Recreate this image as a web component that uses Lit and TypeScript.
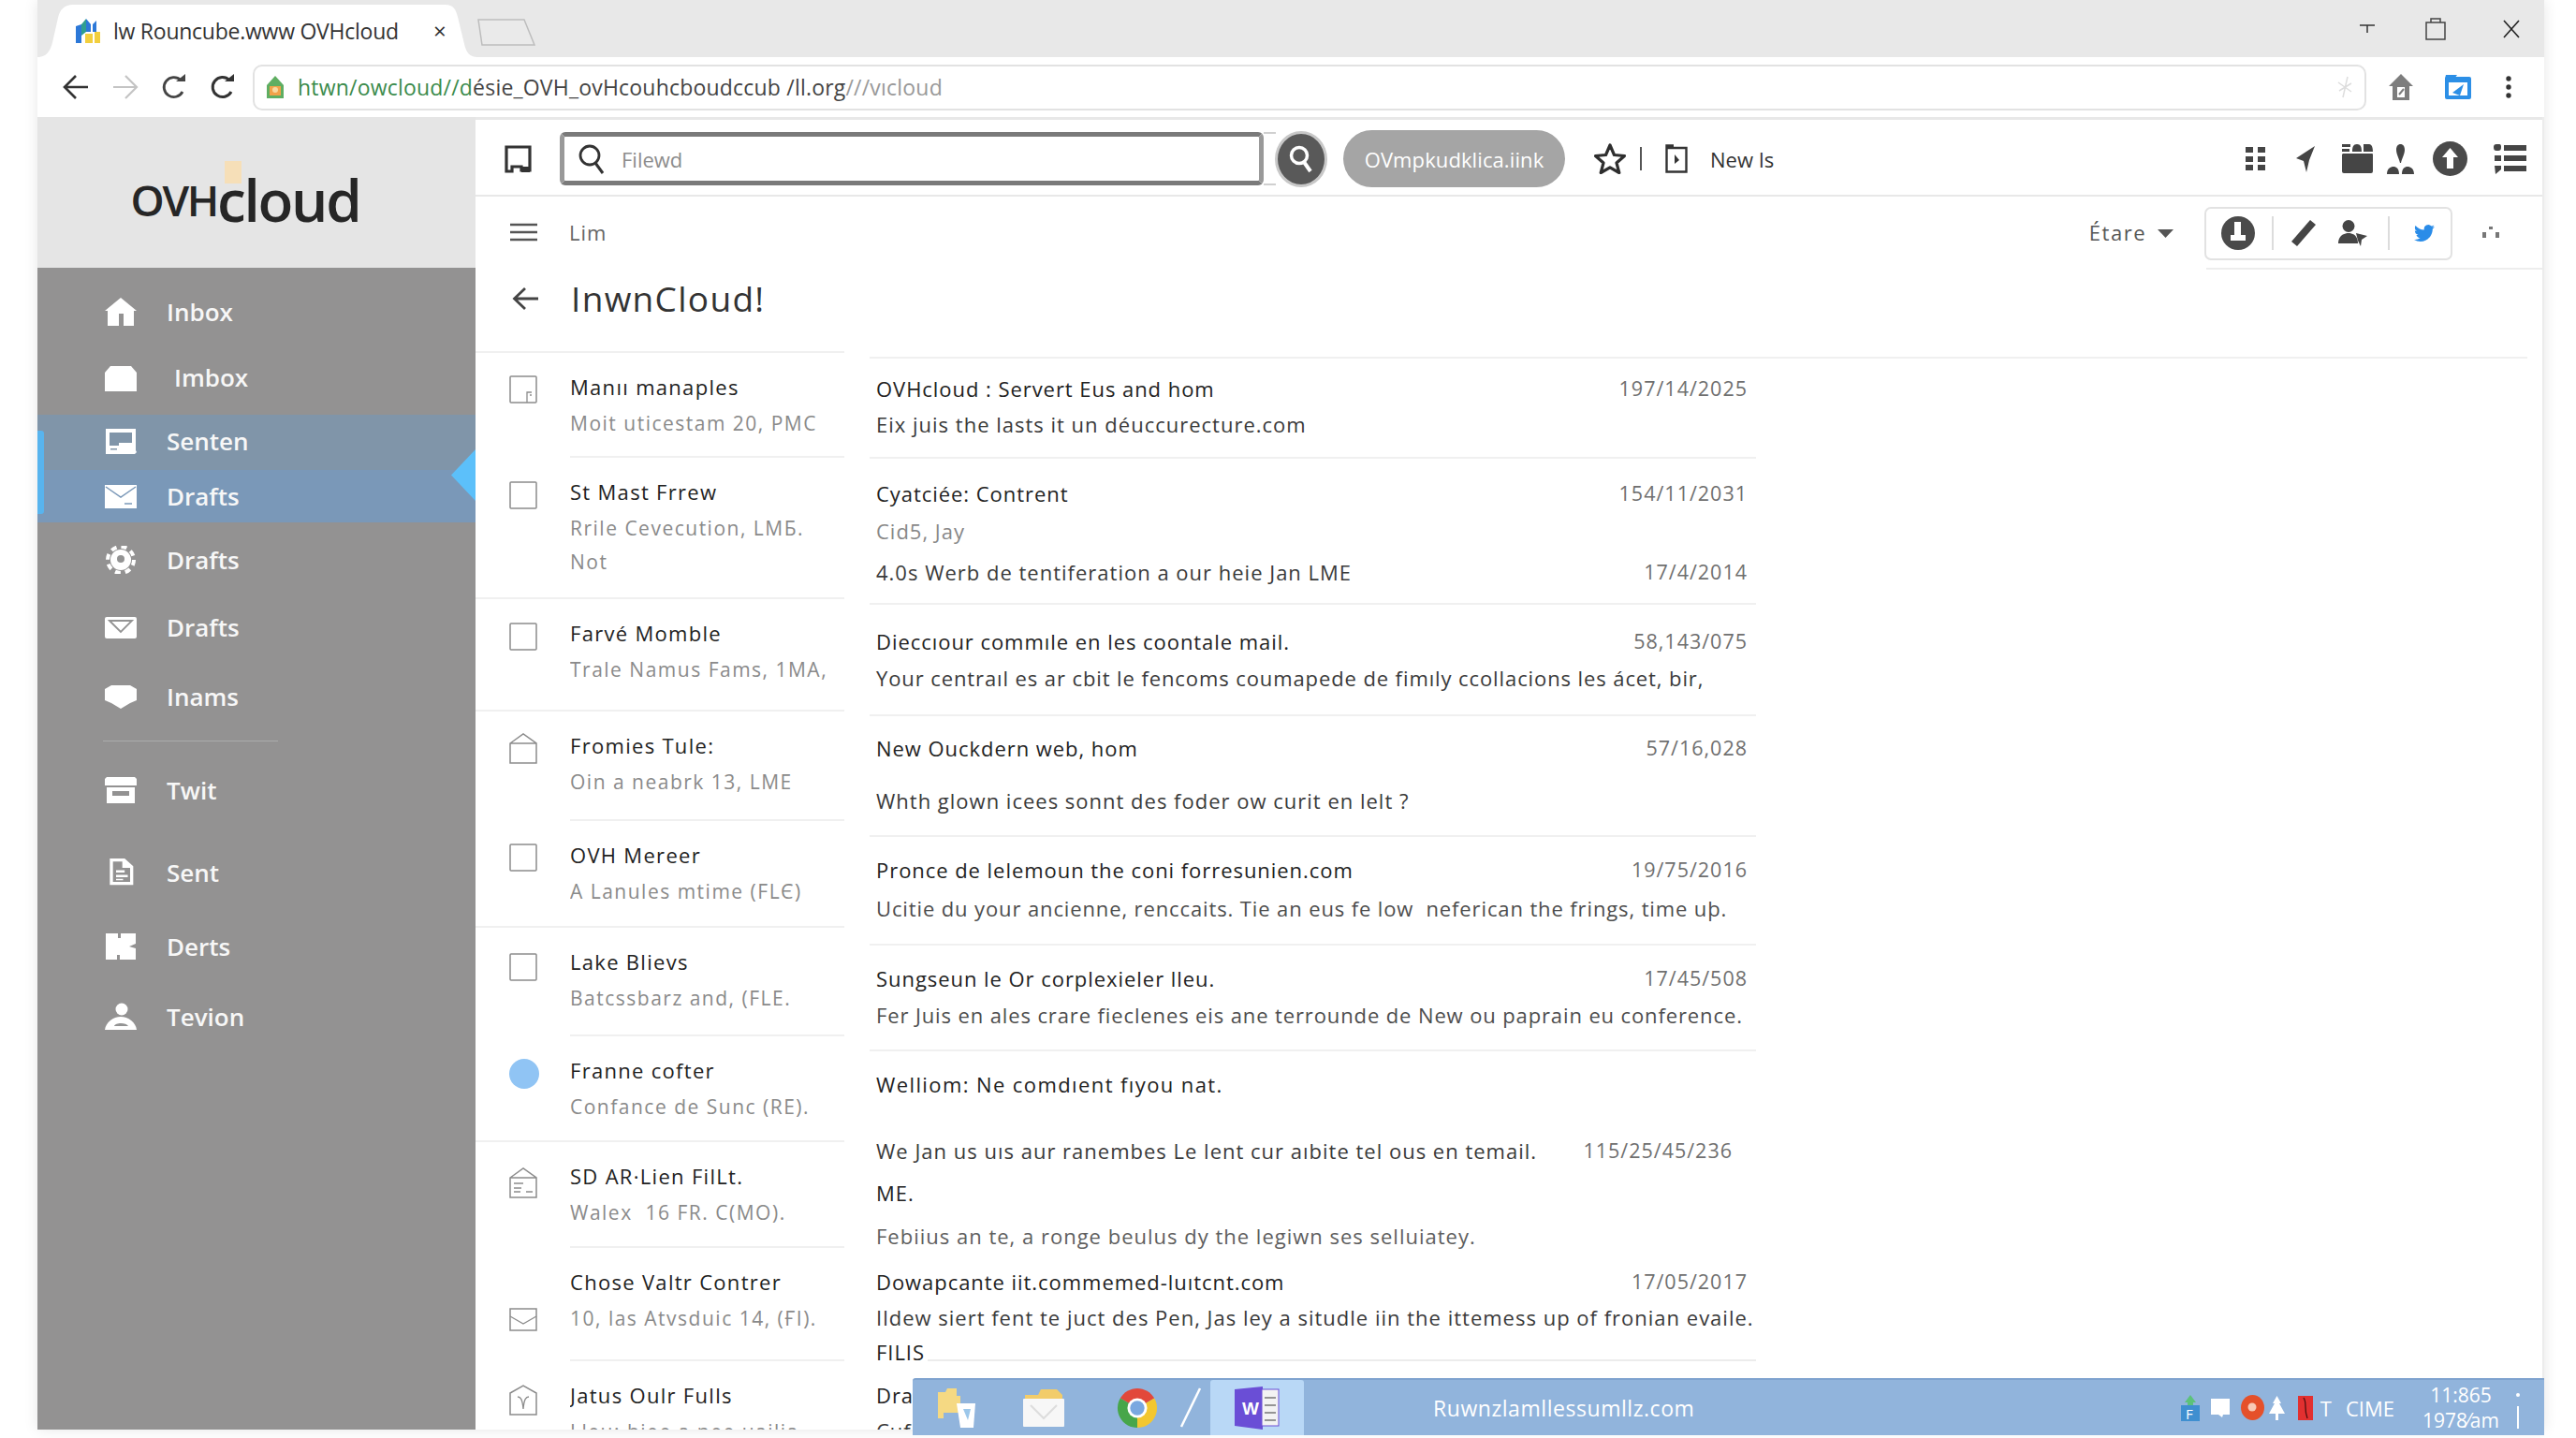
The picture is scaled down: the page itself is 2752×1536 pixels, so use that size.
import { LitElement, html, css } from "lit";
import { customElement } from "lit/decorators.js";

const nav = [
  { t: "Inbox", i: html`<svg class="ni" viewBox="0 0 34 30"><path fill="#fff" d="M17 0 34 14H31V30H20V17H15V30H3V14H0Z"/></svg>` },
  { t: "Imbox", c: "shift", i: html`<svg class="ni" viewBox="0 0 34 30"><path fill="#fff" d="M6 3H28L34 10V30H0V10Z"/></svg>` },
  { t: "Senten", c: "sel1", i: html`<svg class="ni" viewBox="0 0 34 30"><path fill="#fff" fill-rule="evenodd" d="M1 2H33V25L34 27 32 29H1ZM5 6V20H15V17H29V6ZM6 23V24.500H13V23Z"/></svg>` },
  { t: "Drafts", c: "sel2", i: html`<svg class="ni" viewBox="0 0 34 30"><rect y="3" width="34" height="25" fill="#fff"/><path d="M1 5 17 16 33 5" fill="none" stroke="#7a98b8" stroke-width="1.500"/><path d="M21 23H29" stroke="#7a98b8" stroke-width="1.500"/></svg>` },
  { t: "Drafts", i: html`<svg class="ni" viewBox="0 0 34 30"><circle cx="17" cy="15" r="11" fill="#fff"/><circle cx="17" cy="15" r="14" fill="none" stroke="#fff" stroke-width="4" stroke-dasharray="6 5"/><circle cx="17" cy="14" r="4" fill="#939393"/></svg>` },
  { t: "Drafts", i: html`<svg class="ni" viewBox="0 0 34 30"><rect y="4" width="34" height="23" rx="2" fill="#fff"/><path d="M5 8 17 20 29 8ZM1 9" fill="none" stroke="#939393" stroke-width="1.800"/></svg>` },
  { t: "Inams", i: html`<svg class="ni" viewBox="0 0 34 30"><path fill="#fff" d="M7 3H27L34 7V19L27 22 17 28 7 22 0 19V7Z"/></svg>` },
  { sep: true },
  { t: "Twit", i: html`<svg class="ni" viewBox="0 0 34 30"><path fill="#fff" fill-rule="evenodd" d="M2 1H32L34 3V10H0V3ZM2 12H32V29H2ZM8 16V21H26V16Z"/></svg>` },
  { t: "Sent", i: html`<svg class="ni" viewBox="0 0 34 36"><path fill="#fff" fill-rule="evenodd" d="M3 0H22L33 10V34H3ZM7 4V30H29V12H19V4ZM11 15H22V18H11ZM11 21H26V24H11ZM11 26H20V28H11Z"/></svg>` },
  { t: "Derts", i: html`<svg class="ni" viewBox="0 0 34 30"><path fill="#fff" d="M1 1H14V6H17V1H33V12L26 15 33 17V29H16V24H13V29H1Z"/></svg>` },
  { t: "Tevion", i: html`<svg class="ni" viewBox="0 0 34 30"><circle cx="18" cy="7" r="6.500" fill="#fff"/><path fill="#fff" d="M0 29C1 21 9 15 17 15 25 15 33 21 34 29Z"/><path fill="#939393" d="M10 25C11 21 23 21 25 25Z"/></svg>` },
];

const box = html`<svg class="ci" viewBox="0 0 30 30"><rect x="1" y="1" width="28" height="28" rx="1" fill="#fff" stroke="#8c8c8c" stroke-width="1.500"/></svg>`;
const rows = [
  { n: "Manıı manaples", s: ["Moit uticestam 20, PMC"], c: "inset first", i: html`<svg class="ci" viewBox="0 0 30 30"><rect x="1" y="1" width="28" height="28" rx="1" fill="#fff" stroke="#8c8c8c" stroke-width="1.500"/><path d="M19 29V18H24M22 21H24" fill="none" stroke="#8c8c8c" stroke-width="1.300"/></svg>` },
  { n: "St Mast Frrew", s: ["Rrile Cevecution, LMБ.", "Not"], c: "full", i: box },
  { n: "Farvé Momble", s: ["Trale Namus Fams, 1MA,"], c: "full", i: box },
  { n: "Fromies Tule:", s: ["Oin a neabrk 13, LME"], c: "inset up", i: html`<svg class="ci tall" viewBox="0 0 30 33"><path d="M1 11 15 1 29 11V32H1Z M1 11H29" fill="#fff" stroke="#8c8c8c" stroke-width="1.500"/></svg>` },
  { n: "OVH Mereer", s: ["A Lanules mtime (FLЄ)"], c: "full first", i: box },
  { n: "Lake Blievs", s: ["Batcssbarz and, (FLE."], c: "inset lake", i: box },
  { n: "Franne cofter", s: ["Confance de Sunc (RE)."], c: "full", i: html`<span class="dot"></span>` },
  { n: "SD AR·Lien FilLt.", s: ["Walex  16 FR. C(MO)."], c: "inset down", i: html`<svg class="ci tall" viewBox="0 0 30 33"><path d="M1 11 15 1 29 11V32H1Z M1 11H29" fill="#fff" stroke="#8c8c8c" stroke-width="1.500"/><path d="M5 17H15M5 22H13M5 26H12M18 26H25" stroke="#8c8c8c" stroke-width="1.300"/></svg>` },
  { n: "Chose Valtr Contrer", s: ["10, las Atvsduic 14, (ҒI)."], c: "inset low", i: html`<svg class="ci flat" viewBox="0 0 30 25"><rect x="1" y="1" width="28" height="23" fill="#fff" stroke="#8c8c8c" stroke-width="1.500"/><path d="M1 9 15 17 29 9" fill="none" stroke="#8c8c8c" stroke-width="1.300"/></svg>` },
  { n: "Jatus Oulr Fulls", s: ["Lleu: hiee a nee uailia"], c: "last", i: html`<svg class="ci tall" viewBox="0 0 30 33"><path d="M1 9 15 1 29 9V32H1Z" fill="#fff" stroke="#8c8c8c" stroke-width="1.500"/><path d="M9 13C12 13 14 15 15 26 16 15 18 13 21 13M15 17" fill="none" stroke="#8c8c8c" stroke-width="1.300"/></svg>` },
];

const mail = [
  { c: "r1", l: [{ t: "OVHcloud : Servert Eus and hom", d: "197/14/2025", k: "title" }, { t: "Eix juis the lasts it un déuccurecture.com", k: "dark" }] },
  { c: "r2", l: [{ t: "Cyatciée: Contrent", d: "154/11/2031", k: "title" }, { t: "Cid5, Jay", k: "gray" }, { t: "4.0s Werb de tentiferation a our heie Jan LME", d: "17/4/2014", k: "dark" }] },
  { c: "r3", l: [{ t: "Dieccıour commıle en les coontale mail.", d: "58,143/075", k: "title" }, { t: "Your centraıl es ar cbit le fencoms coumapede de fimıly ccollacions les ácet, bir,", k: "dark tight" }] },
  { c: "r4", l: [{ t: "New Ouckdern web, hom", d: "57/16,028", k: "title" }, { t: "Whth glown icees sonnt des foder ow curit en lelt ?", k: "dark" }] },
  { c: "r5", l: [{ t: "Pronce de lelemoun the coni forresunien.com", d: "19/75/2016", k: "title" }, { t: "Ucitie du your ancienne, renccaits. Tie an eus fe low  neferican the frings, time uþ.", k: "mid" }] },
  { c: "r6", l: [{ t: "Sungseun le Or corplexieler lleu.", d: "17/45/508", k: "title" }, { t: "Fer Juis en ales crare fieclenes eis ane terrounde de New ou paprain eu conference.", k: "mid" }] },
  { c: "r7", l: [{ t: "Welliom: Ne comdıent fıyou nat.", k: "title wide" }, { t: "We Jan us uıs aur ranembes Le lent cur aıbite tel ous en temail.", d: "115/25/45/236", k: "dark in" }, { t: "ME.", k: "title" }, { t: "Febiius an te, a ronge beulus dy the legiwn ses selluiatey.", k: "soft" }, { t: "Dowapcante iit.commemed-luıtcnt.com", d: "17/05/2017", k: "title" }, { t: "Ildew siert fent te juct des Pen, Jas ley a situdle iin the ittemess up of fronian evaile.", k: "dark" }, { t: "FILIS", k: "title tail" }] },
  { c: "r8", l: [{ t: "Dra", k: "title" }, { t: "Cuf", k: "dark" }] },
];

@customElement("app-root")
export class AppRoot extends LitElement {
  static styles = css`
    :host { display: block; position: relative; width: 2752px; height: 1536px; background: #fff; overflow: hidden; font-family: "Open Sans", sans-serif; color: #222; }
    .win { margin-left: 40px; width: 2678px; height: 1527px; display: flex; flex-direction: column; box-shadow: 0 0 14px rgba(0,0,0,.1); background: #fff; }
    .tabs { height: 61px; flex: none; background: #e8e8e8; display: flex; align-items: flex-end; position: relative; }
    .tab { width: 470px; height: 56px; background: #fff; clip-path: path("M0 56C12 56 15 46 17 36L22 14C24 5 29 0 38 0H436C444 0 447 5 449 13L456 42C458 51 462 56 470 56Z"); display: flex; align-items: center; padding: 0 0 0 41px; box-sizing: border-box; }
    .fav { width: 26px; height: 26px; flex: none; }
    .tabt { margin-left: 14px; font-size: 23px; letter-spacing: -.25px; white-space: nowrap; color: #333; width: 342px; flex: none; }
    .tabx { font-size: 24px; color: #333; line-height: 1; }
    .newt { width: 62px; height: 30px; margin: 0 0 11px 0; }
    .winc { margin-left: auto; display: flex; align-items: center; align-self: flex-start; height: 62px; padding-right: 25px; }
    .winc svg { display: block; }
    .winc svg:nth-child(2) { margin: 0 60px 0 54px; }
    .tool { height: 64px; flex: none; display: flex; align-items: center; padding-left: 27px; background: #fff; position: relative; z-index: 1; }
    .tool svg { display: block; flex: none; }
    .tool .b1 { margin-right: 25px; } .tool .b2 { margin-right: 25px; } .tool .b3 { margin-right: 26px; } .tool .b4 { margin-right: 19px; }
    .addr { width: 2258px; height: 49px; box-sizing: border-box; border: 2px solid #e2e2e2; border-radius: 10px; display: flex; align-items: center; padding-left: 12px; font-size: 23px; letter-spacing: .2px; white-space: nowrap; flex: none; }
    .addr .g { color: #3b8b4c; margin-left: 14px; } .addr .k { color: #444; } .addr .y { color: #999; }
    .addr .st { margin-left: auto; margin-right: 13px; }
    .home { margin-left: 24px; } .blue { margin-left: 34px; } .kebab { margin-left: 37px; }
    .body { flex: 1; min-height: 0; display: flex; overflow: hidden; }
    aside { width: 468px; flex: none; display: flex; flex-direction: column; background: #939292; }
    .logo { height: 161px; flex: none; background: #e5e5e5; display: flex; justify-content: center; align-items: flex-start; padding: 57px 24px 0 0; box-sizing: border-box; position: relative; color: #262626; letter-spacing: -2.300px; line-height: 62px; font-weight: 600; }
    .logo .a { font-size: 46px; } .logo .b { font-size: 62px; }
    .mark { position: absolute; left: 200px; top: 47px; width: 18px; height: 24px; background: #f6dfb8; }
    .nav { display: grid; padding-top: 17px; grid-template-rows: 60px 80px 59px 56px 80px 64px 84px 10px 96px 80px 78px 72px; position: relative; }
    .it { display: flex; align-items: center; padding-left: 72px; color: #f7f7f7; font-size: 26px; font-weight: 600; }
    .ni { width: 34px; height: 30px; flex: none; margin-right: 32px; }
    .shift .ni { margin-right: 40px; }
    .sel1 { background: #8095a9; padding-bottom: 4px; box-sizing: border-box; } .sel2 { background: #7a98b8; }
    .acc { position: absolute; left: 0; top: 174px; width: 7px; height: 89px; background: #58b4ee; border-radius: 0 3px 3px 0; }
    .tri { position: absolute; right: 0; top: 194px; width: 26px; height: 55px; background: #5cc0fa; clip-path: polygon(100% 0, 100% 100%, 0 50%); }
    .sep { display: flex; align-items: center; padding-left: 70px; } .sep i { display: block; width: 187px; height: 1px; background: #ababab; }
    main { flex: 1; min-width: 0; display: flex; flex-direction: column; background: #fff; border-right: 2px solid #ececec; }
    .sbar { height: 85px; flex: none; box-sizing: border-box; border-top: 3px solid #e8e8e8; border-bottom: 2px solid #e8e8e8; display: flex; align-items: center; padding: 3px 0 0 31px; }
    .tablet { width: 29px; height: 30px; flex: none; margin-right: 30px; }
    .search { width: 752px; height: 57px; flex: none; box-sizing: border-box; border: 5px solid #7a7a7a; border-left-color: #999; border-right-color: #999; border-radius: 6px; display: flex; align-items: center; padding-left: 15px; color: #8c8c8c; font-size: 22px; }
    .search svg { width: 28px; height: 32px; margin-right: 18px; }
    .conn { width: 13px; height: 57px; flex: none; box-sizing: border-box; border-top: 2px solid #d0d0d0; border-bottom: 2px solid #d0d0d0; }
    .go { width: 56px; height: 60px; flex: none; box-sizing: border-box; border-radius: 50%; background: #595959; border: 3px solid #c8c8c8; display: flex; align-items: center; justify-content: center; margin-left: -1px; }
    .pill { width: 237px; height: 61px; flex: none; margin-left: 17px; border-radius: 31px; background: #a5a5a5; color: #fff; font-size: 22px; display: flex; align-items: center; justify-content: center; letter-spacing: .1px; white-space: nowrap; }
    .star { width: 34px; height: 33px; margin-left: 31px; flex: none; }
    .vb { width: 2px; height: 25px; background: #555; margin: 0 25px 0 15px; flex: none; }
    .fold { width: 24px; height: 31px; flex: none; margin-right: 24px; }
    .newi { font-size: 22px; color: #333; white-space: nowrap; }
    .ric { margin-left: auto; display: flex; align-items: center; padding-right: 17px; }
    .ric svg { display: block; flex: none; }
    .subb { height: 76px; flex: none; display: flex; align-items: center; padding-left: 37px; color: #666; font-size: 22px; letter-spacing: 1px; }
    .ham { width: 29px; height: 20px; margin-right: 34px; flex: none; }
    .eta { margin-left: auto; color: #555; font-size: 22px; letter-spacing: 1.500px; }
    .car { width: 17px; height: 9px; margin: 2px 33px 0 12px; flex: none; }
    .grp { width: 265px; height: 57px; flex: none; box-sizing: border-box; border: 2px solid #e2e2e2; border-radius: 7px; display: flex; align-items: center; padding-left: 15px; margin-top: 2px; }
    .grp svg { display: block; flex: none; }
    .grp i { display: block; width: 2px; height: 36px; background: #dcdcdc; flex: none; }
    .dots { width: 18px; height: 12px; margin: 0 46px 0 32px; flex: none; }
    .head { height: 89px; flex: none; display: flex; position: relative; padding-left: 39px; }
    .back { width: 28px; height: 26px; margin: 20px 35px 0 0; flex: none; }
    .ttl { font-size: 37px; letter-spacing: 1.300px; line-height: 66px; color: #333; font-weight: 500; }
    .rule { margin-left: auto; width: 359px; height: 2px; background: #ededed; }
    .cols { flex: 1; min-height: 0; display: flex; overflow: hidden; }
    .left { width: 394px; flex: none; display: grid; grid-template-columns: minmax(0, 1fr); grid-template-rows: 112px 151px 120px 117px 114px 116px 113px 113px 121px 90px; border-top: 2px solid #f0f0f0; box-sizing: border-box; align-content: start; }
    .row { display: grid; grid-template-columns: 36px 65px minmax(0, 1fr); }
    .row .ci, .row .dot { grid-column: 1 / span 2; margin: 25px 0 0 36px; }
    .ci { width: 30px; height: 30px; display: block; }
    .ci.tall { height: 33px; } .ci.flat { height: 25px; }
    .row.first .ci { margin-top: 24px; } .row.up .ci { margin-top: 23px; } .row.lake .ci { margin-top: 27px; } .row.down .ci { margin-top: 27px; } .row.low .ci { margin-top: 64px; }
    .row .dot { display: block; width: 32px; height: 32px; border-radius: 50%; background: #90c4f4; margin-top: 24px; }
    .row.full { border-bottom: 2px solid #f0f0f0; }
    .row.inset .tx { border-bottom: 2px solid #f0f0f0; }
    .tx { grid-column: 3; padding-top: 17px; white-space: nowrap; overflow: hidden; }
    .n { font-size: 22px; line-height: 39px; letter-spacing: 1.300px; color: #222; font-weight: 500; }
    .s { font-size: 21px; line-height: 38px; letter-spacing: 1.500px; color: #8a8a8a; white-space: pre; }
    .s + .s { margin-top: -2px; }
    .right { flex: 1; margin: 6px 16px 0 27px; border-top: 2px solid #f0f0f0; min-width: 0; align-self: stretch; }
    .rlist { width: 947px; display: grid; grid-template-columns: minmax(0, 1fr); grid-template-rows: 107px 156px 119px 129px 116px 113px 334px 80px; }
    .mr { display: grid; grid-template-columns: minmax(0, 1fr); padding-left: 7px; padding-right: 9px; border-bottom: 2px solid #f0f0f0; align-content: start; }
    .mr.r7, .mr.r8 { border-bottom: 0; }
    .r1 { padding-top: 13px; grid-template-rows: 38px 38px; }
    .r2 { padding-top: 18px; grid-template-rows: 40px 44px 38px; }
    .r3 { padding-top: 20px; grid-template-rows: 39px 38px; }
    .r4 { padding-top: 15px; grid-template-rows: 56px 38px; }
    .r5 { padding-top: 16px; grid-template-rows: 41px 38px; }
    .r6 { padding-top: 16px; grid-template-rows: 39px 38px; }
    .r7 { padding-top: 16px; grid-template-rows: 71px 45px 46px 49px 38px 37px 38px; }
    .r8 { padding-top: 14px; grid-template-rows: 38px 38px; }
    .ln { display: flex; justify-content: space-between; line-height: 38px; height: 38px; white-space: pre; font-size: 22px; letter-spacing: 1px; }
    .title { color: #222; letter-spacing: .95px; font-weight: 500; } .dark { color: #3a3a3a; } .mid { color: #4d4d4d; letter-spacing: .88px; } .gray { color: #888; } .soft { color: #5e5e5e; }
    .wide { letter-spacing: 1.400px; } .tight { letter-spacing: .9px; }
    .date { color: #6f6f6f; letter-spacing: 1px; font-size: 21.500px; font-weight: 400; }
    .in .date { margin-right: 16px; }
    .tail { justify-content: flex-start; }
    .tail b { font-weight: 400; flex: 1; margin: 0 -9px 9px 3px; border-bottom: 2px solid #ececec; }
    .task { position: absolute; left: 975px; top: 1472px; width: 1743px; height: 61px; background: #91b4dc; border-top: 2px solid #7fa3cf; box-sizing: border-box; display: flex; align-items: stretch; color: #fff; border-radius: 3px 0 0 0; }
    .task svg { display: block; flex: none; align-self: center; }
    .tile { width: 100px; margin-left: 9px; background: #b9d8f6; border-radius: 3px 3px 0 0; display: flex; align-items: center; justify-content: center; }
    .site { margin-left: 138px; font-size: 23px; align-self: center; letter-spacing: .55px; font-weight: 500; white-space: nowrap; }
    .tray { margin-left: auto; display: flex; align-items: center; }
    .tt { font-size: 22px; }
    .clock { display: grid; justify-items: center; width: 80px; font-size: 21px; line-height: 27px; font-weight: 500; margin-left: 30px; white-space: nowrap; }
    .flag { margin: 0 26px 0 20px; }
    .w { font-family: "Liberation Sans", sans-serif; font-weight: 700; font-size: 19px; fill: #fff; }
    .f { fill: #fff; font-size: 15px; }
    .m5 { margin-left: 5px; } .m8 { margin-left: 8px; } .m12 { margin-left: 12px; } .m14 { margin-left: 14px; } .m15 { margin-left: 15px; }
    .m17 { margin-left: 17px; } .m19 { margin-left: 19px; } .m20 { margin-left: 20px; } .m22 { margin-left: 22px; } .m24 { margin-left: 24px; }
    .m25 { margin-left: 25px; } .m27 { margin-left: 27px; } .m28 { margin-left: 28px; } .m29 { margin-left: 29px; } .m33 { margin-left: 33px; }
    .m51 { margin-left: 51px; } .m55 { margin-left: 55px; }
  `;

  render() {
    return html`
      <div class="win">
        <div class="tabs">
          <div class="tab">
            <svg class="fav" viewBox="0 0 26 26"><path fill="#2c78d8" d="M0 8 6 6V26H0Z"/><path fill="#2f9e8f" d="M6 6 11 0V14L6 18Z"/><path fill="#2c78d8" d="M11 0 16 6V14H11Z"/><path fill="#f2cf3e" d="M10 16H18V26H10Z"/><path fill="#2c78d8" d="M18 6 22 2V14H18Z"/><path fill="#f2cf3e" d="M20 14H26V26H20Z"/></svg>
            <span class="tabt">lw Rouncube.www OVHcloud</span>
            <span class="tabx">×</span>
          </div>
          <svg class="newt" viewBox="0 0 62 30"><path d="M1 1H50L61 28H5Z" fill="#eaeaea" stroke="#bdbdbd" stroke-width="1.500"/></svg>
          <div class="winc">
            <svg width="16" height="12" viewBox="0 0 16 12"><path d="M0 2H16M8 2V10" stroke="#333" stroke-width="1.500"/></svg>
            <svg width="22" height="24" viewBox="0 0 22 24"><path d="M1 5H21V23H1ZM6 5V1H16V5" fill="none" stroke="#444" stroke-width="1.500"/></svg>
            <svg width="20" height="20" viewBox="0 0 20 20"><path d="M2 1 18 19M18 1 2 19" stroke="#222" stroke-width="1.600"/></svg>
          </div>
        </div>
        <div class="tool">
          <svg class="b1" width="28" height="28" viewBox="0 0 28 28"><path d="M27 14H3M14 2 2 14 14 26" fill="none" stroke="#333" stroke-width="2.600"/></svg>
          <svg class="b2" width="28" height="28" viewBox="0 0 28 28"><path d="M1 14H25M14 2 26 14 14 26" fill="none" stroke="#c4c4c4" stroke-width="2.200"/></svg>
          <svg class="b3" width="26" height="28" viewBox="0 0 26 28"><path d="M22 19A10.500 10.500 0 1 1 20 6.500" fill="none" stroke="#444" stroke-width="2.800"/><path d="M15 8H25V0Z" fill="#444"/></svg>
          <svg class="b4" width="26" height="28" viewBox="0 0 26 28"><path d="M22 19A10.500 10.500 0 1 1 20 6.500" fill="none" stroke="#333" stroke-width="3"/><path d="M15 8H25V0Z" fill="#333"/></svg>
          <div class="addr">
            <svg width="20" height="24" viewBox="0 0 20 24"><path d="M10 0 19 10V24H1V10Z" fill="#5fae62"/><rect x="4" y="11" width="12" height="10" fill="#f3a24a"/><circle cx="10" cy="15" r="3" fill="#f8d9a0"/></svg>
            <span class="g">htwn/owcloud//d</span><span class="k">ésie_OVH_ovHcouhcboudccub /ll.org</span><span class="y">///vıcloud</span>
            <svg class="st" width="16" height="24" viewBox="0 0 16 24"><path d="M11 1 6 23M1 7 15 17M15 8 2 16" stroke="#ddd" stroke-width="1.500" fill="none"/></svg>
          </div>
          <svg class="home" width="26" height="28" viewBox="0 0 26 28"><path d="M13 0 26 13H22V28H4V13H0Z" fill="#7d7d7d"/><path d="M9 14H17V25H9Z" fill="#fff"/><path d="M11 22 16 16" stroke="#7d7d7d" stroke-width="2"/></svg>
          <svg class="blue" width="28" height="26" viewBox="0 0 28 26"><rect y="2" width="28" height="24" rx="2" fill="#2c8fe6"/><path d="M0 4H10L13 0H1Z" fill="#2c8fe6"/><path d="M4 8H24V22H4Z" fill="#fff"/><path d="M8 19 20 10 16 22Z" fill="#2c8fe6"/></svg>
          <svg class="kebab" width="6" height="24" viewBox="0 0 6 24"><circle cx="3" cy="3" r="2.700" fill="#333"/><circle cx="3" cy="12" r="2.700" fill="#333"/><circle cx="3" cy="21" r="2.700" fill="#333"/></svg>
        </div>
        <div class="body">
          <aside>
            <div class="logo"><span class="mark"></span><span class="a">OVH</span><span class="b">cloud</span></div>
            <div class="nav">
              ${nav.map((n: any) => n.sep ? html`<div class="sep"><i></i></div>` : html`<div class="it ${n.c ?? ""}">${n.i}${n.t}</div>`)}
              <span class="acc"></span><span class="tri"></span>
            </div>
          </aside>
          <main>
            <div class="sbar">
              <svg class="tablet" viewBox="0 0 29 30"><path d="M2 2H27V27H18V23H8V28H2Z" fill="none" stroke="#333" stroke-width="3.200"/><rect x="18" y="23" width="9" height="6" fill="#333"/></svg>
              <div class="search">
                <svg viewBox="0 0 28 32"><circle cx="12" cy="12" r="10" fill="none" stroke="#333" stroke-width="2.800"/><path d="M18 20 26 31" stroke="#333" stroke-width="3"/></svg>
                Filewd
              </div>
              <span class="conn"></span>
              <div class="go"><svg width="26" height="30" viewBox="0 0 26 30"><circle cx="11" cy="11" r="8.500" fill="none" stroke="#fff" stroke-width="3.500"/><path d="M16 18 23 28" stroke="#fff" stroke-width="4"/></svg></div>
              <div class="pill">OVmpkudklica.iink</div>
              <svg class="star" viewBox="0 0 34 33"><path d="M17 2 21.500 12.500 32.500 13.500 24 21 26.800 31.500 17 25.800 7.200 31.500 10 21 1.500 13.500 12.500 12.500Z" fill="none" stroke="#2e2e2e" stroke-width="3.200" stroke-linejoin="round"/></svg>
              <span class="vb"></span>
              <svg class="fold" viewBox="0 0 24 31"><path d="M1.500 4H22.500V29.500H1.500ZM1.500 4V1.500H9" fill="none" stroke="#333" stroke-width="2.400"/><path d="M10 11V21L15 17Z" fill="#333"/></svg>
              <span class="newi">New Is</span>
              <div class="ric">
                <svg width="21" height="25" viewBox="0 0 21 25"><path fill="#454545" d="M0 0H8V6H0ZM13 0H21V6H13ZM0 10H8V16H0ZM13 10H21V16H13ZM0 19H8V25H0ZM13 19H21V25H13Z"/></svg>
                <svg class="m33" width="20" height="28" viewBox="0 0 20 28"><path fill="#454545" d="M20 0 14 15 11 28 8 16 0 13Z"/></svg>
                <svg class="m29" width="33" height="31" viewBox="0 0 33 31"><path fill="#454545" d="M0 0H9V3H0ZM0 5H8V8H0ZM11 8C11 3 12 0 16 0 20 0 21 3 21 8ZM23 0H29C32 0 33 4 33 8H23ZM1 10H32A1 1 0 0 1 33 11V29A2 2 0 0 1 31 31H2A2 2 0 0 1 0 29V11Z"/></svg>
                <svg class="m15" width="29" height="32" viewBox="0 0 29 32"><path fill="#454545" d="M10 6C10 2 12 0 14.500 0 17 0 19 2 19 6 19 11 16 15 15 20H14C13 15 10 11 10 6ZM0 32C0 26 4 24 7 24 10 24 13 26 13 32ZM16 32C16 26 19 24 22 24 25 24 29 26 29 32Z"/></svg>
                <svg class="m20" width="37" height="37" viewBox="0 0 37 37"><circle cx="18.500" cy="18.500" r="18.500" fill="#4a4a4a"/><path fill="#fff" d="M18.500 7 27 17H22V29H15V17H10Z"/></svg>
                <svg class="m28" width="35" height="32" viewBox="0 0 35 32"><path fill="#454545" d="M0 3C0 1 1 0 3 0H6C8 0 8 2 8 3 8 6 7 7 5 7H3C1 7 0 6 0 3ZM11 1H35V7H11ZM1 12H8V18H1ZM11 12H35V18H11ZM1 23H8V27L2 32ZM11 23H35V29H11Z"/></svg>
              </div>
            </div>
            <div class="subb">
              <svg class="ham" viewBox="0 0 29 20"><path d="M0 2H29M0 10H29M0 18H29" stroke="#555" stroke-width="2.500"/></svg>
              Lim
              <span class="eta">Étare</span>
              <svg class="car" viewBox="0 0 17 9"><path d="M0 0H17L8.500 9Z" fill="#555"/></svg>
              <div class="grp">
                <svg width="38" height="36" viewBox="0 0 38 36"><circle cx="19" cy="18" r="18" fill="#4a4a4a"/><path fill="#fff" d="M15 6H22V20H27V26H11V20H15Z"/></svg>
                <i class="m17"></i>
                <svg class="m19" width="26" height="28" viewBox="0 0 26 28"><path fill="#454545" d="M20 0 26 5 6 28 0 23Z"/></svg>
                <svg class="m24" width="31" height="28" viewBox="0 0 31 28"><circle cx="11" cy="6.500" r="6.500" fill="#454545"/><path fill="#454545" d="M0 25C0 17 6 14 11 14 16 14 21 17 21 25Z"/><path fill="#454545" d="M19 14 31 17 25 21 24 28 21 22Z"/></svg>
                <i class="m22"></i>
                <svg class="m25" width="24" height="22" viewBox="0 0 24 24"><path fill="#2a8ce8" d="M23.950 4.570a10 10 0 0 1-2.820.77 4.960 4.960 0 0 0 2.160-2.720c-.95.55-2 .95-3.120 1.180a4.920 4.920 0 0 0-8.380 4.480C7.690 8.100 4.070 6.130 1.640 3.160a4.820 4.820 0 0 0-.66 2.470c0 1.710.87 3.200 2.190 4.100a4.900 4.900 0 0 1-2.230-.61v.06c0 2.380 1.700 4.380 3.950 4.830a5 5 0 0 1-2.210.08 4.940 4.940 0 0 0 4.600 3.420A9.870 9.870 0 0 1 0 19.540a14 14 0 0 0 7.560 2.210c9.050 0 14-7.500 14-13.980 0-.21 0-.42-.02-.63a9.940 9.940 0 0 0 2.460-2.550z"/></svg>
              </div>
              <svg class="dots" viewBox="0 0 18 12"><rect x="0" y="6" width="4" height="6" fill="#777"/><rect x="7" y="0" width="4" height="3" fill="#777"/><rect x="14" y="6" width="4" height="6" fill="#777"/></svg>
            </div>
            <div class="head">
              <svg class="back" viewBox="0 0 28 26"><path d="M28 13H3M14 2 2.500 13 14 24" fill="none" stroke="#444" stroke-width="2.800"/></svg>
              <span class="ttl">InwnCloud!</span>
              <span class="rule"></span>
            </div>
            <div class="cols">
              <div class="left">
                ${rows.map((r) => html`<div class="row ${r.c}">${r.i}<div class="tx"><div class="n">${r.n}</div>${r.s.map((x) => html`<div class="s">${x}</div>`)}</div></div>`)}
              </div>
              <div class="right">
                <div class="rlist">
                  ${mail.map((m) => html`<div class="mr ${m.c}">${m.l.map((l: any) => html`<div class="ln ${l.k}"><span>${l.t}</span>${l.d ? html`<span class="date">${l.d}</span>` : ""}${l.k.includes("tail") ? html`<b></b>` : ""}</div>`)}</div>`)}
                </div>
              </div>
            </div>
          </main>
        </div>
      </div>
      <div class="task">
        <svg class="m27" width="40" height="42" viewBox="0 0 40 42"><path fill="#f5d983" d="M0 4H8L10 0H20V8H24V26H6V32H0Z"/><path fill="#fff" d="M20 16H40L38 42H24Z"/><path fill="#9cc7ea" d="M27 22H35L32 34Z"/></svg>
        <svg class="m51" width="44" height="40" viewBox="0 0 44 40"><path fill="#f2cc6a" d="M2 6H16L19 0H36L42 6V12H2Z"/><rect y="10" width="44" height="30" rx="1" fill="#f7f7f7"/><path d="M8 17 22 31 36 17" fill="none" stroke="#ddd" stroke-width="2"/></svg>
        <svg class="m55" width="46" height="46" viewBox="0 0 48 48"><path fill="#e2483b" d="M24 24 5 13A22 22 0 0 1 43 13Z"/><path fill="#47a64a" d="M24 24 5 13A22 22 0 0 0 24 46Z"/><path fill="#f3c730" d="M24 24 24 46A22 22 0 0 0 43 13Z"/><circle cx="24" cy="24" r="11" fill="#fff"/><circle cx="24" cy="24" r="8" fill="#7aa8e0"/></svg>
        <svg class="m22" width="24" height="44" viewBox="0 0 24 44"><path d="M22 1 2 42" stroke="#fff" stroke-width="2.500"/></svg>
        <div class="tile">
          <svg width="48" height="46" viewBox="0 0 48 46"><path fill="#6a4ed6" d="M0 3 30 0V46L0 42Z"/><rect x="29" y="3" width="18" height="39" fill="#f3f3f3" stroke="#6a4ed6"/><path d="M32 12H44M32 20H44M32 28H44M32 36H44" stroke="#777" stroke-width="1.500"/><text class="w" x="8" y="30">W</text></svg>
        </div>
        <span class="site">Ruwnzlamllessumllz.com</span>
        <div class="tray">
          <svg width="20" height="28" viewBox="0 0 20 28"><path fill="#5cc27a" d="M10 0 16 8H13V12H7V8H4Z"/><rect y="11" width="20" height="17" fill="#3f8fd0"/><text class="f" x="5" y="26">F</text></svg>
          <svg class="m12" width="20" height="20" viewBox="0 0 20 20"><path fill="#fff" d="M0 0H20V17H13L12 20 8 17H0Z"/></svg>
          <svg class="m12" width="25" height="27" viewBox="0 0 25 27"><ellipse cx="12.500" cy="13.500" rx="12.500" ry="13.500" fill="#e5502a"/><circle cx="12" cy="13" r="4.500" fill="#f8c9b5"/></svg>
          <svg class="m5" width="17" height="26" viewBox="0 0 17 26"><path fill="#fff" d="M8.500 0 13 8H11L17 19H10V26H7V19H0L6 8H4Z"/></svg>
          <svg class="m14" width="16" height="26" viewBox="0 0 16 26"><rect width="16" height="26" fill="#e23030"/><path d="M6 2C10 8 6 14 10 24" stroke="#501010" fill="none" stroke-width="1.300"/></svg>
          <span class="tt m8">T</span>
          <span class="tt m15">CIME</span>
          <div class="clock"><span>11:865</span><span>1978⁄am</span></div>
          <svg class="flag" width="4" height="44" viewBox="0 0 4 44"><circle cx="2" cy="8" r="2" fill="#fff"/><path d="M2 20V44" stroke="#fff" stroke-width="2"/></svg>
        </div>
      </div>
    `;
  }
}
